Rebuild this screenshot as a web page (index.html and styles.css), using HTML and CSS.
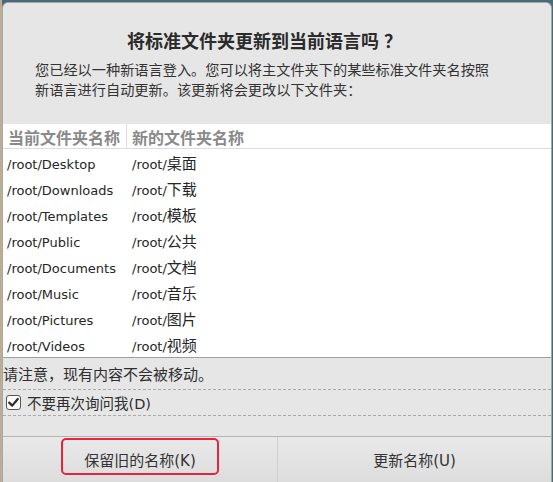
FILE: index.html
```html
<!DOCTYPE html>
<html lang="zh-CN">
<head>
<meta charset="utf-8">
<link rel="stylesheet" href="styles.css">
</head>
<body>
<div class="dialog">
  <h1 class="title">将标准文件夹更新到当前语言吗<span class="qm">？</span></h1>
  <p class="desc">您已经以一种新语言登入。您可以将主文件夹下的某些标准文件夹名按照<br>新语言进行自动更新。该更新将会更改以下文件夹：</p>
  <div class="table">
    <div class="row head">
      <div class="c1">当前文件夹名称</div>
      <div class="c2">新的文件夹名称</div>
    </div>
    <div class="row"><div class="c1">/root/Desktop</div><div class="c2">/root/<span class="cjk">桌面</span></div></div>
    <div class="row"><div class="c1">/root/Downloads</div><div class="c2">/root/<span class="cjk">下载</span></div></div>
    <div class="row"><div class="c1">/root/Templates</div><div class="c2">/root/<span class="cjk">模板</span></div></div>
    <div class="row"><div class="c1">/root/Public</div><div class="c2">/root/<span class="cjk">公共</span></div></div>
    <div class="row"><div class="c1">/root/Documents</div><div class="c2">/root/<span class="cjk">文档</span></div></div>
    <div class="row"><div class="c1">/root/Music</div><div class="c2">/root/<span class="cjk">音乐</span></div></div>
    <div class="row"><div class="c1">/root/Pictures</div><div class="c2">/root/<span class="cjk">图片</span></div></div>
    <div class="row"><div class="c1">/root/Videos</div><div class="c2">/root/<span class="cjk">视频</span></div></div>
  </div>
  <div class="note">请注意，现有内容不会被移动。</div>
  <label class="check">
    <svg class="box" width="15" height="15" viewBox="0 0 15 15">
      <rect x="0.5" y="0.5" width="14" height="14" rx="2.5" fill="#fafafa" stroke="#555"/>
      <path d="M3.2 7.6 L6.2 10.6 L11.8 4" fill="none" stroke="#2b2b2b" stroke-width="2.2" stroke-linecap="round" stroke-linejoin="round"/>
    </svg>
    <span>不要再次询问我(D)</span>
  </label>
  <div class="spacer"></div>
  <div class="buttons">
    <div class="btn left">保留旧的名称(K)<span class="mark"></span></div>
    <div class="btn right">更新名称(U)</div>
  </div>
</div>
</body>
</html>
```

FILE: styles.css
```css
html, body {
  margin: 0;
  padding: 0;
}
body {
  width: 553px;
  height: 482px;
  overflow: hidden;
  background: linear-gradient(to right, #b6a88f 0, #c2b59c 2px, #48697b 2px);
  font-family: "DejaVu Sans", "Noto Sans CJK SC", sans-serif;
  color: #2e2e2e;
}
.dialog {
  margin: 2px 1px 0 2px;
  height: 480px;
  box-sizing: border-box;
  background: #e6e6e6;
  border: 1px solid #a6a6a6;
  border-bottom: none;
  border-radius: 6px 6px 0 0;
  display: flex;
  flex-direction: column;
  overflow: hidden;
}
.title {
  margin: 25px 0 0;
  padding-right: 25px;
  font-size: 18px;
  line-height: 24px;
  font-weight: bold;
  text-align: center;
  color: #2b2b2b;
  font-family: "Noto Sans CJK SC", sans-serif;
}
.title .qm {
  margin-left: 5px;
}
.desc {
  margin: 7px 0 0 32px;
  font-size: 14.2px;
  line-height: 20px;
  font-family: "Noto Sans CJK SC", sans-serif;
  color: #333;
}
.table {
  margin-top: 25px;
  background: #fff;
  border-bottom: 1px solid #9e9e9e;
}
.row {
  display: flex;
  height: 26px;
  align-items: baseline;
  font-size: 13px;
  line-height: 18px;
  padding-top: 6px;
  box-sizing: border-box;
  color: #262626;
}
.row .c1 {
  width: 124px;
  padding-left: 4px;
  box-sizing: border-box;
  white-space: nowrap;
}
.row .c2 {
  padding-left: 5px;
  white-space: nowrap;
}
.row .cjk {
  font-family: "Noto Sans CJK SC", sans-serif;
  font-size: 15px;
  line-height: 1;
}
.row.head {
  height: 25px;
  padding-top: 0;
  line-height: normal;
  border-bottom: 1px solid #dcdcdc;
  font-family: "Noto Sans CJK SC", sans-serif;
  font-size: 16px;
  font-weight: bold;
  color: #8a8a8a;
  align-items: stretch;
}
.row.head .c1 {
  display: flex;
  align-items: center;
  padding-left: 5px;
  padding-top: 2px;
  border-right: 1px solid #dcdcdc;
}
.row.head .c2 {
  display: flex;
  align-items: center;
  padding-left: 5px;
  padding-top: 2px;
}
.note {
  height: 31px;
  line-height: 31px;
  font-size: 15px;
  border-bottom: 1px dashed #a9a9a9;
  font-family: "Noto Sans CJK SC", sans-serif;
}
.check {
  height: 25px;
  display: flex;
  align-items: center;
  gap: 6px;
  padding-left: 3px;
  font-size: 14.5px;
  border-bottom: 1px dashed #a9a9a9;
}
.check .box {
  flex: none;
}
.spacer {
  flex: 1;
}
.buttons {
  height: 45px;
  display: flex;
  border-top: 1px solid #b4b4b4;
  box-shadow: inset 0 1px 0 #fafafa;
}
.btn {
  position: relative;
  display: flex;
  align-items: center;
  justify-content: center;
  font-size: 15px;
  background: linear-gradient(to bottom, #e9e9e9, #dddddd);
  color: #333;
}
.btn.left {
  width: 274px;
  border-right: 1px solid #cfcfcf;
}
.btn.right {
  flex: 1;
}
.mark {
  position: absolute;
  left: 58px;
  top: 1px;
  width: 158px;
  height: 37px;
  box-sizing: border-box;
  border: 2px solid #e5243d;
  border-radius: 5px;
}
```
